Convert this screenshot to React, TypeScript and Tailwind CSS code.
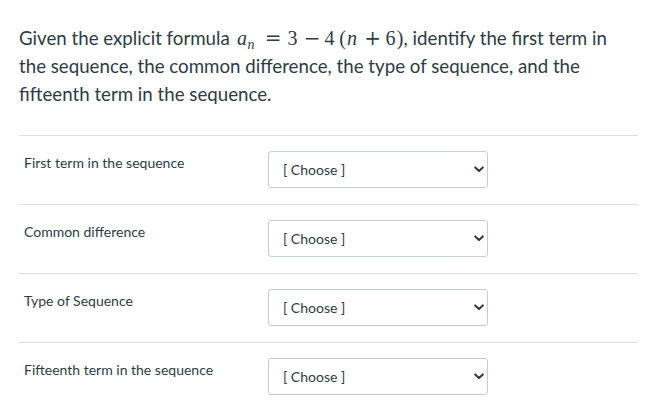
import React from "react";

const rows = [
  "First term in the sequence",
  "Common difference",
  "Type of Sequence",
  "Fifteenth term in the sequence",
];

function Chevron() {
  return (
    <svg width="10" height="7" viewBox="0 0 10 7" className="shrink-0">
      <path d="M1.2 1.4 L5 5 L8.8 1.4" fill="none" stroke="#2d3b45" strokeWidth="2" strokeLinecap="round" strokeLinejoin="round" />
    </svg>
  );
}

export default function App() {
  const serif = { fontFamily: '"Liberation Serif", "DejaVu Serif", serif' };
  const op = { fontFamily: '"DejaVu Serif", "Liberation Serif", serif' };
  return (
    <div className="w-[657px] h-[403px] bg-white overflow-hidden text-[#2d3b45]" style={{ fontFamily: 'Lato, "Liberation Sans", sans-serif' }}>
      <div className="px-[19px] pt-[24px]">
        <p className="text-[18.7px] leading-[28px] w-[619px]">
          Given the explicit formula{" "}
          <span className="whitespace-nowrap text-[20px]" style={serif}>
            <span className="inline-block w-[11px] ml-[2px] italic text-center">a</span>
            <span className="inline-block w-[9px] italic text-left text-[14px] align-[-4px] leading-[14px]">n</span>
            <span className="inline-block w-[21px] ml-[6px] text-center" style={op}>=</span>
            <span className="inline-block w-[12px] ml-[3px] text-center">3</span>
            <span className="inline-block w-[19px] ml-[4px] text-center" style={op}>−</span>
            <span className="inline-block w-[12px] ml-[2px] text-center">4</span>
            <span className="inline-block w-[8px] ml-[3px] text-center">(</span>
            <span className="inline-block w-[11px] italic text-center">n</span>
            <span className="inline-block w-[20px] ml-[5px] text-center" style={op}>+</span>
            <span className="inline-block w-[12px] ml-[2px] text-center">6</span>
            <span className="inline-block w-[7px] text-center">)</span>
          </span>
          , identify the first term in the sequence, the common difference, the type of sequence, and the fifteenth term in the sequence.
        </p>
        <div className="mt-[27px] border-t border-[#dcdfe2]">
          {rows.map((r) => (
            <div key={r} className="flex h-[69px] border-b border-[#dcdfe2]">
              <div className="w-[249px] pl-[5px] pt-[17px] text-[14px] leading-[20px]">{r}</div>
              <div className="pt-[15px]">
                <div className="w-[220px] h-[37px] border border-[#c7cdd1] rounded-[3px] flex items-center justify-between pl-[14px] pr-[3px] text-[14px]">
                  <span>[ Choose ]</span>
                  <Chevron />
                </div>
              </div>
            </div>
          ))}
        </div>
      </div>
    </div>
  );
}
